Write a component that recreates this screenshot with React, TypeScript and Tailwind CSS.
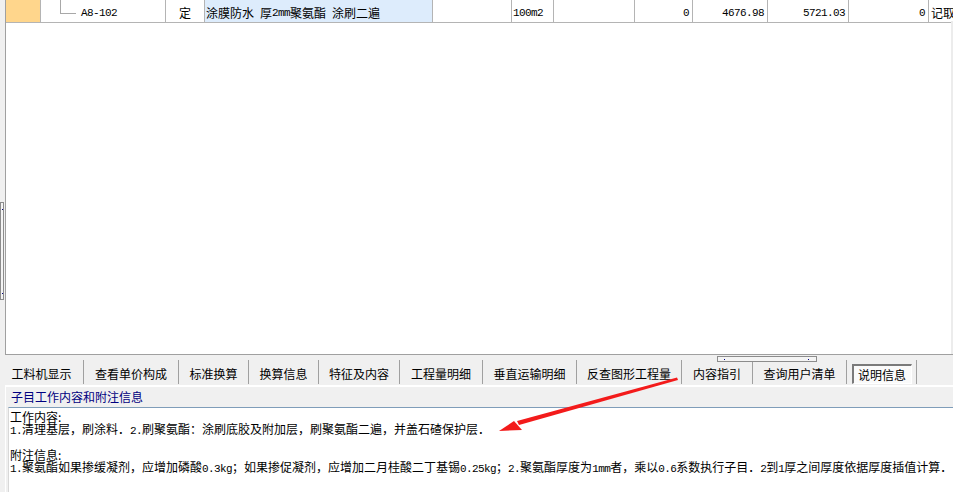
import React from "react";

const A = ({ children }: { children: React.ReactNode }) => (
  <span className="font-['Liberation_Mono',monospace] text-[11px] tracking-[-0.6px]">{children}</span>
);

const tabs: { label: string; w: string; selected?: boolean }[] = [
  { label: "工料机显示", w: "w-[83px]" },
  { label: "查看单价构成", w: "w-[94px]" },
  { label: "标准换算", w: "w-[69px]" },
  { label: "换算信息", w: "w-[69px]" },
  { label: "特征及内容", w: "w-[80px]" },
  { label: "工程量明细", w: "w-[82px]" },
  { label: "垂直运输明细", w: "w-[93px]" },
  { label: "反查图形工程量", w: "w-[104px]" },
  { label: "内容指引", w: "w-[70px]" },
  { label: "查询用户清单", w: "w-[93px]" },
  { label: "说明信息", w: "w-[69px]", selected: true },
];

export default function App() {
  return (
    <div className="relative w-[953px] h-[492px] overflow-hidden bg-[#f0f0f0] font-['Noto_Sans_CJK_SC',sans-serif] text-black flex flex-col">
      {/* Grid area */}
      <div className="flex h-[355px] shrink-0">
        <div className="w-[5px] shrink-0 bg-[#f0f0f0]" />
        <div className="flex-1 bg-white border-l border-b border-[#a0a0a0] overflow-hidden relative">
          {/* single row */}
          <div className="flex h-[23px] border-b border-[#b4b4b4] text-[12px] leading-[12px] whitespace-nowrap">
            <div className="w-[35px] shrink-0 bg-[#ffd68c] border-r border-[#b4b4b4]" />
            <div className="w-[125px] shrink-0 border-r border-[#b4b4b4] relative">
              <div className="absolute left-[19px] top-0 w-[1px] h-[13px] bg-[#a8a8a8]" />
              <div className="absolute left-[19px] top-[13px] w-[16px] h-[1px] bg-[#a8a8a8]" />
              <div className="h-full flex items-center pt-[4px] pl-[40px]">
                <A>A8-102</A>
              </div>
            </div>
            <div className="w-[39px] shrink-0 border-r border-[#b4b4b4] flex items-center justify-center pt-[4px]">定</div>
            <div className="w-[228px] shrink-0 border-r border-[#b4b4b4] bg-[#ddecfc] flex items-center pt-[4px] pl-[1px]">
              <span>涂膜防水</span>
              <span className="inline-block w-[6px]" />
              <span>厚</span>
              <A>2mm</A>
              <span>聚氨酯</span>
              <span className="inline-block w-[6px]" />
              <span>涂刷二遍</span>
            </div>
            <div className="w-[79px] shrink-0 border-r border-[#b4b4b4]" />
            <div className="w-[42px] shrink-0 border-r border-[#b4b4b4] flex items-center pt-[4px] pl-[1px]">
              <A>100m2</A>
            </div>
            <div className="w-[81px] shrink-0 border-r border-[#b4b4b4]" />
            <div className="w-[58px] shrink-0 border-r border-[#b4b4b4] flex items-center justify-end pt-[4px] pr-[3px]">
              <A>0</A>
            </div>
            <div className="w-[75px] shrink-0 border-r border-[#b4b4b4] flex items-center justify-end pt-[4px] pr-[3px]">
              <A>4676.98</A>
            </div>
            <div className="w-[81px] shrink-0 border-r border-[#b4b4b4] flex items-center justify-end pt-[4px] pr-[3px]">
              <A>5721.03</A>
            </div>
            <div className="w-[80px] shrink-0 border-r border-[#b4b4b4] flex items-center justify-end pt-[4px] pr-[3px]">
              <A>0</A>
            </div>
            <div className="flex-1 flex items-center pt-[4px] pl-[2px]">记取</div>
          </div>
          <div className="absolute right-0 top-[21px] bottom-0 w-[2px] bg-[#ececec]" />
        </div>
      </div>

      {/* Tab bar */}
      <div className="relative h-[30px] shrink-0 flex items-end pb-[1px] text-[12px] whitespace-nowrap">
        {tabs.map((t) => (
          <React.Fragment key={t.label}>
            <div className={`${t.w} shrink-0 h-[20px] flex items-center justify-center`}>
              {t.selected ? (
                <div className="w-[60px] h-[20px] flex items-center justify-center bg-[#fafafa] border-t-2 border-l-2 border-[#7a7a7a] border-b border-r border-b-white border-r-white">
                  {t.label}
                </div>
              ) : (
                <span>{t.label}</span>
              )}
            </div>
            <div className="w-[1px] h-[24px] shrink-0 bg-[#a0a0a0] self-end" />
          </React.Fragment>
        ))}
        {/* splitter handle */}
        <div className="absolute left-[717px] top-[1px] w-[100px] h-[6px] border border-[#8c8c8c] bg-[#f4f4f4]">
          <div className="absolute left-[6px] top-[2px] w-[1px] h-[1px] bg-[#000080]" />
          <div className="absolute right-[7px] top-[2px] w-[1px] h-[1px] bg-[#000080]" />
        </div>
      </div>

      {/* Lower panel */}
      <div className="flex-1 flex flex-col ml-[5px] border-t-2 border-l border-white">
        <div className="h-[20px] shrink-0 flex items-center pl-[5px] text-[12px] text-[#000080] whitespace-nowrap">
          子目工作内容和附注信息
        </div>
        <div className="flex-1 ml-[2px] bg-white border-t border-t-[#7f9db9] border-l border-l-[#d8d8d8] pt-[3px] pl-[1px] text-[12px] leading-[12px] whitespace-nowrap">
          <div>工作内容:</div>
          <div>
            <A>1.</A>清理基层，刷涂料．<A>2.</A>刷聚氨酯：涂刷底胶及附加层，刷聚氨酯二遍，并盖石碴保护层．
          </div>
          <div className="h-[12px]" />
          <div>附注信息:</div>
          <div>
            <A>1.</A>聚氨酯如果掺缓凝剂，应增加磷酸<A>0.3kg</A>；如果掺促凝剂，应增加二月桂酸二丁基锡<A>0.25kg</A>；<A>2.</A>聚氨酯厚度为<A>1mm</A>者，乘以<A>0.6</A>系数执行子目．<A>2</A>到<A>1</A>厚之间厚度依据厚度插值计算．
          </div>
        </div>
      </div>

      {/* left splitter handle */}
      <div className="absolute left-0 top-[202px] w-[4px] h-[98px] border border-[#8c8c8c] bg-[#f4f4f4]">
        <div className="absolute left-[1px] top-[6px] w-[1px] h-[1px] bg-[#000080]" />
        <div className="absolute left-[1px] bottom-[5px] w-[1px] h-[1px] bg-[#000080]" />
      </div>

      {/* red arrow annotation */}
      <svg className="absolute left-0 top-0 pointer-events-none" width="953" height="492">
        <polygon points="677,377.5 678,380 519,425 517,421" fill="#f31b1b" />
        <polygon points="499,431 514,421 522,430" fill="#f31b1b" />
      </svg>
    </div>
  );
}
